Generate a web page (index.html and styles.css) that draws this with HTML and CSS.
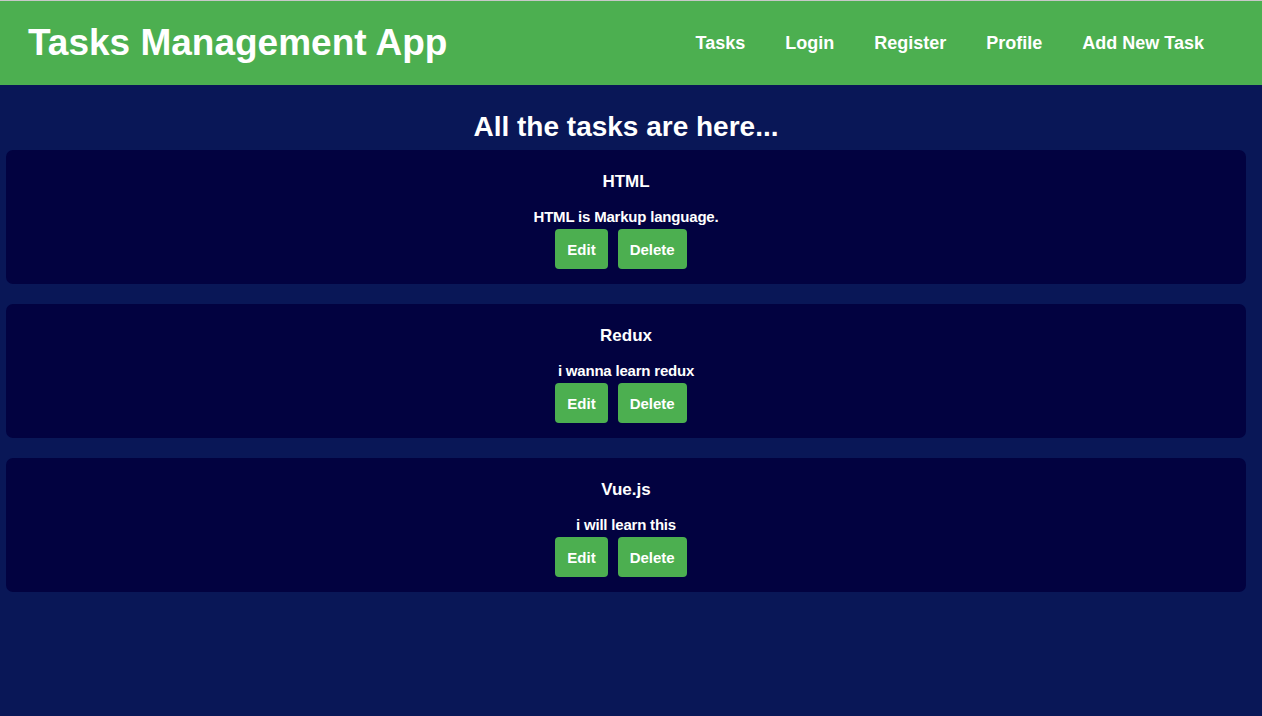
FILE: index.html
```html
<!DOCTYPE html>
<html lang="en">
<head>
<meta charset="utf-8">
<title>Tasks Management App</title>
<link rel="stylesheet" href="styles.css">
</head>
<body>
<header class="header">
  <h1 class="brand">Tasks Management App</h1>
  <nav class="nav">
    <a class="nav-link" href="#">Tasks</a>
    <a class="nav-link" href="#">Login</a>
    <a class="nav-link" href="#">Register</a>
    <a class="nav-link" href="#">Profile</a>
    <a class="nav-link" href="#">Add New Task</a>
  </nav>
</header>
<main class="main">
  <h2 class="page-title">All the tasks are here...</h2>
  <div class="task-list">
    <section class="task-card">
      <h3 class="task-title">HTML</h3>
      <p class="task-desc">HTML is Markup language.</p>
      <div class="task-actions">
        <button class="btn">Edit</button>
        <button class="btn">Delete</button>
      </div>
    </section>
    <section class="task-card">
      <h3 class="task-title">Redux</h3>
      <p class="task-desc">i wanna learn redux</p>
      <div class="task-actions">
        <button class="btn">Edit</button>
        <button class="btn">Delete</button>
      </div>
    </section>
    <section class="task-card">
      <h3 class="task-title">Vue.js</h3>
      <p class="task-desc">i will learn this</p>
      <div class="task-actions">
        <button class="btn">Edit</button>
        <button class="btn">Delete</button>
      </div>
    </section>
  </div>
</main>
</body>
</html>
```
FILE: styles.css
```css
* { box-sizing: border-box; }
html, body { height: 100%; }
body {
  margin: 0;
  background: #091757;
  color: #ffffff;
  font-family: "Liberation Sans", Arial, sans-serif;
  font-weight: bold;
  border-top: 1px solid #c8c8c8;
}
.header {
  height: 84px;
  background: #4caf50;
  display: flex;
  align-items: center;
  justify-content: space-between;
  padding: 0 38px 0 28px;
}
.brand {
  margin: 0;
  font-size: 37px;
  line-height: 44px;
}
.nav {
  display: flex;
  align-items: center;
}
.nav-link {
  color: #ffffff;
  text-decoration: none;
  font-size: 18px;
  padding: 0 20px;
}
.main {
  padding: 0 16px 0 6px;
}
.page-title {
  margin: 0;
  padding-top: 26px;
  text-align: center;
  font-size: 28px;
  line-height: 32px;
}
.task-list {
  display: flex;
  flex-direction: column;
  gap: 20px;
  margin-top: 7px;
}
.task-card {
  background: #020240;
  border-radius: 7px;
  height: 134px;
  padding-top: 22px;
  display: flex;
  flex-direction: column;
  align-items: center;
}
.task-title {
  margin: 0;
  font-size: 17px;
  line-height: 20px;
}
.task-desc {
  margin: 16px 0 0;
  font-size: 15px;
  line-height: 18px;
  letter-spacing: -0.2px;
}
.task-actions {
  display: flex;
  margin-top: 3px;
}
.btn {
  background: #4caf50;
  color: #ffffff;
  border: none;
  border-radius: 4px;
  height: 40px;
  padding: 0 12px;
  margin-right: 10px;
  font-family: "Liberation Sans", Arial, sans-serif;
  font-weight: bold;
  font-size: 15px;
}
```
